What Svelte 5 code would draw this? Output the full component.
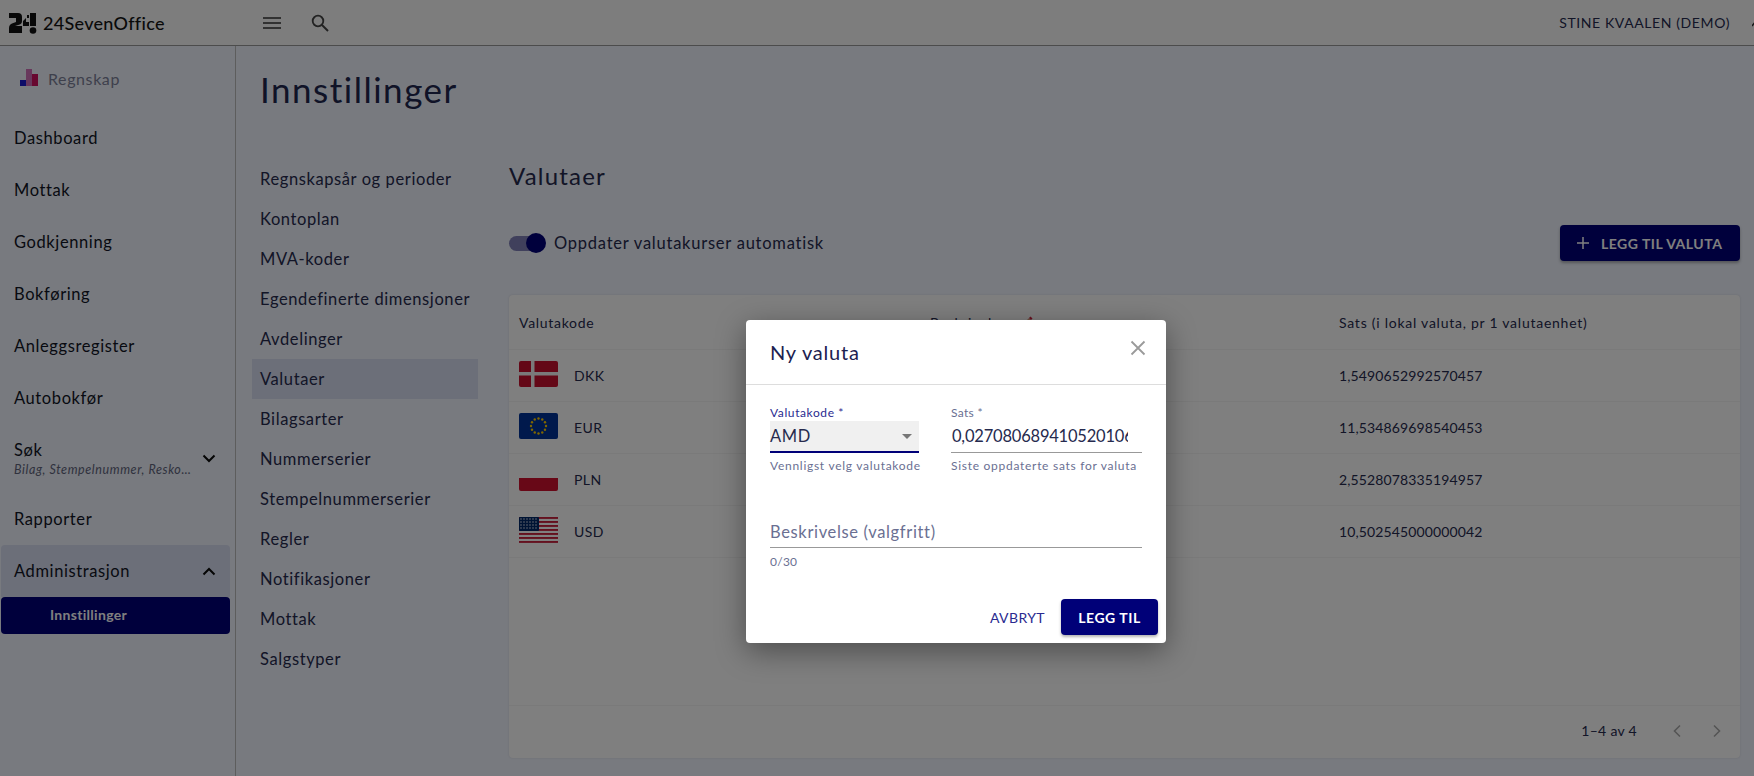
<script>
  const sideItems = ['Dashboard', 'Mottak', 'Godkjenning', 'Bokføring', 'Anleggsregister', 'Autobokfør'];
  const settings = ['Regnskapsår og perioder', 'Kontoplan', 'MVA-koder', 'Egendefinerte dimensjoner', 'Avdelinger', 'Valutaer', 'Bilagsarter', 'Nummerserier', 'Stempelnummerserier', 'Regler', 'Notifikasjoner', 'Mottak', 'Salgstyper'];
  const currencies = [
    { code: 'DKK', rate: '1,5490652992570457' },
    { code: 'EUR', rate: '11,534869698540453' },
    { code: 'PLN', rate: '2,5528078335194957' },
    { code: 'USD', rate: '10,502545000000042' }
  ];
  const stars = Array.from({ length: 12 }, (_, i) => ({
    x: 19.500 + 7.500 * Math.sin((i * Math.PI) / 6),
    y: 13 - 7.500 * Math.cos((i * Math.PI) / 6)
  }));
</script>

<div class="page">
  <header class="topbar">
    <div class="brand">
      <svg class="logo" width="29" height="22" viewBox="0 0 29 22">
        <path d="M1 1h9a4 4 0 0 1 4 4v4a4 4 0 0 1-3 3.800L7 14h7v7H1v-5a5 5 0 0 1 3-4.500L8 10V6H1z" fill="#101010" />
        <path d="M15 9l3-3v4h3v4h-6z" fill="#101010" />
        <rect x="22" y="1" width="6" height="13" fill="#101010" />
        <rect x="19" y="3" width="2" height="3" fill="#101010" />
        <circle cx="25" cy="18.500" r="3.300" fill="#101010" />
      </svg>
      <span class="brand-name">24SevenOffice</span>
    </div>
    <svg class="hamburger" width="18" height="12" viewBox="0 0 18 12"><path d="M0 1h18M0 6h18M0 11h18" stroke="#333" stroke-width="1.600" /></svg>
    <svg class="search" width="18" height="18" viewBox="0 0 18 18"><circle cx="7" cy="7" r="5.300" fill="none" stroke="#444" stroke-width="1.800" /><path d="M11 11l6 6" stroke="#444" stroke-width="2" /></svg>
    <span class="user">STINE KVAALEN (DEMO)</span>
    <svg class="user-mark" width="8" height="8" viewBox="0 0 8 8"><path d="M0 7l4-5 4 5" fill="none" stroke="#333" stroke-width="1.500" /></svg>
  </header>

  <div class="body">
    <aside class="sidebar">
      <div class="module">
        <svg width="19" height="18" viewBox="0 0 19 18">
          <rect x="0" y="11" width="6" height="6" fill="#1a1ad0" />
          <rect x="6" y="0" width="6" height="17" fill="#d070b8" />
          <rect x="12" y="5" width="6" height="12" fill="#d01060" />
        </svg>
        <span>Regnskap</span>
      </div>
      <nav>
        {#each sideItems as item}
          <div class="side-item">{item}</div>
        {/each}
        <div class="side-item search-item">
          <div class="search-text">
            <div>Søk</div>
            <div class="sub">Bilag, Stempelnummer, Resko…</div>
          </div>
          <svg width="14" height="9" viewBox="0 0 14 9"><path d="M1.500 1.500L7 7l5.500-5.500" fill="none" stroke="#0a0a0a" stroke-width="2" /></svg>
        </div>
        <div class="side-item">Rapporter</div>
        <div class="side-item open">
          <span>Administrasjon</span>
          <svg width="14" height="9" viewBox="0 0 14 9"><path d="M1.500 7.500L7 2l5.500 5.500" fill="none" stroke="#0a0a0a" stroke-width="2" /></svg>
        </div>
        <div class="side-sub">Innstillinger</div>
      </nav>
    </aside>

    <main class="main">
      <h1>Innstillinger</h1>
      <div class="columns">
        <div class="settings-nav">
          {#each settings as s}
            <div class="settings-item" class:selected={s === 'Valutaer'}>{s}</div>
          {/each}
        </div>

        <section class="content">
          <h2>Valutaer</h2>
          <div class="toolbar">
            <div class="toggle">
              <span class="track"><span class="thumb"></span></span>
              <span>Oppdater valutakurser automatisk</span>
            </div>
            <button class="add">
              <svg width="14" height="14" viewBox="0 0 14 14"><path d="M7 1v12M1 7h12" stroke="#fff" stroke-width="1.500" /></svg>
              LEGG TIL VALUTA
            </button>
          </div>

          <div class="card">
            <div class="row head">
              <span>Valutakode</span>
              <span class="desc-head">Beskrivelse
                <svg width="12" height="12" viewBox="0 0 12 12"><path d="M1 11l1-3 6-6 2 2-6 6z" fill="#e0a080" /><path d="M8 2l1.500-1.500 2 2L10 4z" fill="#d02040" /></svg>
              </span>
              <span class="rate-head">Sats (i lokal valuta, pr 1 valutaenhet)</span>
            </div>
            {#each currencies as c}
              <div class="row">
                <span class="code">
                  <svg class="flag" width="39" height="26" viewBox="0 0 39 26">
                    {#if c.code === 'DKK'}
                      <rect width="39" height="26" rx="2" fill="#c8102e" />
                      <path d="M12 0h3.500v26H12zM0 11h39v3.500H0z" fill="#f4f4f4" />
                    {:else if c.code === 'EUR'}
                      <rect width="39" height="26" rx="2" fill="#003399" />
                      {#each stars as st}
                        <circle cx={st.x} cy={st.y} r="1.200" fill="#ffcc00" />
                      {/each}
                    {:else if c.code === 'PLN'}
                      <rect width="39" height="13" fill="#fff" />
                      <path d="M0 13h39v11a2 2 0 0 1-2 2H2a2 2 0 0 1-2-2z" fill="#d0102e" />
                    {:else}
                      <rect width="39" height="25" fill="#fff" />
                      {#each [0, 4, 8, 12, 16, 20, 24] as y}
                        <rect y={y} width="39" height="1.900" fill="#c8203c" />
                      {/each}
                      <rect width="20" height="14" rx="1" fill="#002868" />
                      {#each [2, 5, 8, 11] as y}
                        {#each [2, 5, 8, 11, 14, 17] as x}
                          <circle cx={x} cy={y} r="0.700" fill="#fff" />
                        {/each}
                      {/each}
                    {/if}
                  </svg>
                  {c.code}
                </span>
                <span></span>
                <span class="rate">{c.rate}</span>
              </div>
            {/each}
            <div class="spacer"></div>
            <div class="pager">
              <span class="range">1–4 av 4</span>
              <svg width="10" height="14" viewBox="0 0 10 14"><path d="M8 1.500L2.500 7 8 12.500" fill="none" stroke="#aaa" stroke-width="1.600" /></svg>
              <svg width="10" height="14" viewBox="0 0 10 14"><path d="M2 1.500L7.500 7 2 12.500" fill="none" stroke="#aaa" stroke-width="1.600" /></svg>
            </div>
          </div>
        </section>
      </div>
    </main>
  </div>

  <div class="backdrop"></div>

  <div class="dialog">
    <div class="dialog-head">
      <span>Ny valuta</span>
      <svg width="16" height="16" viewBox="0 0 16 16"><path d="M1.500 1.500l13 13M14.500 1.500l-13 13" stroke="#9a9a9a" stroke-width="1.800" /></svg>
    </div>
    <div class="dialog-body">
      <div class="fields">
        <div class="field select-field">
          <label for="code" class="focus">Valutakode *</label>
          <div id="code" class="select">
            <span>AMD</span>
            <i class="caret"></i>
          </div>
          <div class="help">Vennligst velg valutakode</div>
        </div>
        <div class="field rate-field">
          <label for="rate">Sats *</label>
          <div id="rate" class="input"><span>0,02708068941052010637</span></div>
          <div class="help">Siste oppdaterte sats for valuta</div>
        </div>
      </div>
      <div class="desc-field">
        <div class="input desc">Beskrivelse (valgfritt)</div>
        <div class="help count">0/30</div>
      </div>
    </div>
    <div class="actions">
      <button class="cancel">AVBRYT</button>
      <button class="confirm">LEGG TIL</button>
    </div>
  </div>
</div>

<style>
  :global(body) {
    margin: 0;
    overflow: hidden;
    font-family: "Lato", "Open Sans", sans-serif;
  }

  .page {
    position: relative;
    width: 1754px;
    height: 776px;
    overflow: hidden;
    background: #f0f4fe;
    color: #262a4e;
    font-size: 16.500px;
    letter-spacing: 0.6px;
  }

  .topbar {
    display: flex;
    align-items: center;
    height: 45px;
    background: #fbfbfb;
    border-bottom: 1px solid #999;
    box-sizing: content-box;
  }

  .brand {
    display: flex;
    align-items: center;
    gap: 6px;
    width: 263px;
    padding-left: 8px;
    box-sizing: border-box;
  }

  .brand-name {
    font-size: 18px;
    letter-spacing: 0.3px;
    color: #151515;
    font-weight: 500;
  }

  .hamburger { margin-right: 30px; }

  .user {
    margin-left: auto;
    font-size: 14px;
    letter-spacing: 0.6px;
    margin-right: 22px;
  }

  .user-mark { margin-right: -6px; }

  .body {
    display: flex;
    height: 730px;
  }

  .sidebar {
    width: 236px;
    flex: none;
    border-right: 1px solid #bbb;
    box-sizing: border-box;
    color: #111425;
  }

  .module {
    display: flex;
    align-items: center;
    gap: 9px;
    height: 64px;
    margin-bottom: 2px;
    padding-left: 20px;
    color: #7d8199;
    font-size: 16px;
  }

  .side-item {
    display: flex;
    align-items: center;
    justify-content: space-between;
    height: 52px;
    padding: 0 14px 0 13px;
    margin: 0 5px 0 1px;
  }

  .search-item {
    height: 69px;
    align-items: flex-start;
    padding-top: 16px;
    box-sizing: border-box;
  }

  .search-item svg { margin-top: 14px; }

  .sub {
    font-size: 12.500px;
    font-style: italic;
    color: #60647c;
    letter-spacing: 0.6px;
    margin-top: 2px;
    white-space: nowrap;
  }

  .open {
    background: #d8def2;
    border-radius: 4px 4px 0 0;
  }

  .side-sub {
    height: 37px;
    margin: 0 5px 0 1px;
    padding-left: 49px;
    display: flex;
    align-items: center;
    background: #000078;
    color: #fff;
    border-radius: 4px;
    font-size: 14px;
    font-weight: 700;
    letter-spacing: 0.3px;
    padding-bottom: 2px;
    box-sizing: border-box;
  }

  .main {
    flex: 1;
    padding: 0 14px 0 16px;
  }

  h1 {
    margin: 0;
    height: 88px;
    line-height: 86px;
    padding-left: 8px;
    font-size: 35px;
    font-weight: 400;
    color: #20264f;
    letter-spacing: 1.500px;
  }

  .columns { display: flex; }

  .settings-nav {
    width: 226px;
    flex: none;
    padding-top: 25px;
    margin-right: 31px;
  }

  .settings-item {
    height: 40px;
    line-height: 40px;
    padding-left: 8px;
    white-space: nowrap;
  }

  .selected {
    background: #d8def2;
  }

  .content { flex: 1; }

  h2 {
    margin: 0;
    height: 66px;
    padding-top: 22px;
    box-sizing: content-box;
    line-height: 40px;
    font-size: 24px;
    font-weight: 400;
    letter-spacing: 1.200px;
  }

  .toolbar {
    display: flex;
    align-items: center;
    justify-content: space-between;
    height: 36px;
    margin-top: 3px;
    margin-bottom: 34px;
  }

  .toggle {
    display: flex;
    align-items: center;
    gap: 9px;
    letter-spacing: 0.76px;
  }

  .track {
    display: block;
    width: 36px;
    height: 15px;
    border-radius: 8px;
    background: #8080b8;
    position: relative;
  }

  .thumb {
    position: absolute;
    right: -1px;
    top: -2.500px;
    width: 20px;
    height: 20px;
    border-radius: 50%;
    background: #000078;
  }

  button {
    font-family: inherit;
    border: 0;
    cursor: pointer;
  }

  .add {
    display: flex;
    align-items: center;
    gap: 11px;
    height: 36px;
    width: 180px;
    padding: 0 0 0 16px;
    background: #000078;
    color: #fff;
    border-radius: 4px;
    font-size: 14px;
    font-weight: 700;
    letter-spacing: 0.5px;
    box-shadow: 0 2px 3px rgba(0, 0, 0, 0.3);
  }

  .card {
    display: flex;
    flex-direction: column;
    height: 463px;
    background: #fff;
    border-radius: 4px;
    box-shadow: 0 0 2px rgba(0, 0, 0, 0.12);
  }

  .row {
    display: grid;
    grid-template-columns: 411px 409px 1fr;
    align-items: center;
    height: 51px;
    padding-left: 10px;
    border-bottom: 1px solid #f5f5f5;
    font-size: 14px;
    letter-spacing: 0.4px;
  }

  .head {
    height: 54px;
    letter-spacing: 0.7px;
  }

  .rate-head { letter-spacing: 0.75px; }
  .rate { letter-spacing: 0.12px; }

  .desc-head svg { margin-left: 10px; }

  .code {
    display: flex;
    align-items: center;
    gap: 16px;
  }

  .flag { margin-top: -4px; }

  .spacer {
    flex: 1;
    border-bottom: 1px solid #f5f5f5;
  }

  .pager {
    display: flex;
    align-items: center;
    justify-content: flex-end;
    height: 52px;
    font-size: 14px;
    letter-spacing: 0.3px;
    gap: 30px;
    padding-right: 18px;
  }

  .range { margin-right: 5px; margin-top: -3px; }
  .pager svg { margin-top: -3px; }

  .backdrop {
    position: absolute;
    inset: 0;
    background: rgba(0, 0, 0, 0.5);
  }

  .dialog {
    position: absolute;
    left: 746px;
    top: 320px;
    width: 420px;
    height: 323px;
    background: #fff;
    border-radius: 4px;
    box-shadow: 0 8px 30px rgba(0, 0, 0, 0.4);
  }

  .dialog-head {
    display: flex;
    align-items: center;
    justify-content: space-between;
    height: 64px;
    padding: 0 20px 0 24px;
    border-bottom: 1px solid #ddd;
    font-size: 20px;
    letter-spacing: 0.8px;
    color: #1c2150;
  }

  .dialog-head svg { margin-top: -8px; }

  .dialog-body {
    padding: 20px 24px 0;
  }

  .fields {
    display: flex;
    gap: 32px;
  }

  .field { display: flex; flex-direction: column; }
  .select-field { width: 149px; }
  .rate-field { width: 191px; }

  label {
    font-size: 12px;
    line-height: 16px;
    color: #6a6f92;
    letter-spacing: 0.3px;
  }

  label.focus { color: #2a2a90; letter-spacing: 0.6px; }

  .select {
    display: flex;
    align-items: center;
    justify-content: space-between;
    height: 30px;
    background: #f0f0f0;
    border-bottom: 2px solid #000078;
  }

  .caret {
    width: 0;
    height: 0;
    margin-right: 7px;
    border: 5px solid transparent;
    border-top-color: #777;
    border-bottom-width: 0;
  }

  .input {
    height: 31px;
    line-height: 31px;
    border-bottom: 1px solid #999;
    overflow: hidden;
    white-space: nowrap;
  }

  .input span {
    display: block;
    width: 176px;
    margin-left: 1px;
    overflow: hidden;
    letter-spacing: -0.2px;
  }

  .help {
    margin-top: 5px;
    font-size: 12px;
    line-height: 16px;
    color: #6a6f92;
    letter-spacing: 0.72px;
    white-space: nowrap;
  }

  .count {
    margin-top: 6px;
    letter-spacing: 0.25px;
  }

  .desc-field { margin-top: 42px; }

  .desc {
    color: #6a6f92;
    letter-spacing: 0.65px;
    line-height: 33px;
  }

  .actions {
    position: absolute;
    right: 8px;
    bottom: 8px;
    display: flex;
    align-items: center;
    gap: 16px;
  }

  .cancel {
    background: none;
    color: #2a2a90;
    font-size: 14px;
    letter-spacing: 0.4px;
    padding: 0;
  }

  .confirm {
    width: 97px;
    height: 36px;
    padding: 0;
    background: #000078;
    color: #fff;
    border-radius: 4px;
    font-size: 14px;
    font-weight: 700;
    letter-spacing: 0.55px;
    box-shadow: 0 2px 3px rgba(0, 0, 0, 0.3);
  }
</style>
